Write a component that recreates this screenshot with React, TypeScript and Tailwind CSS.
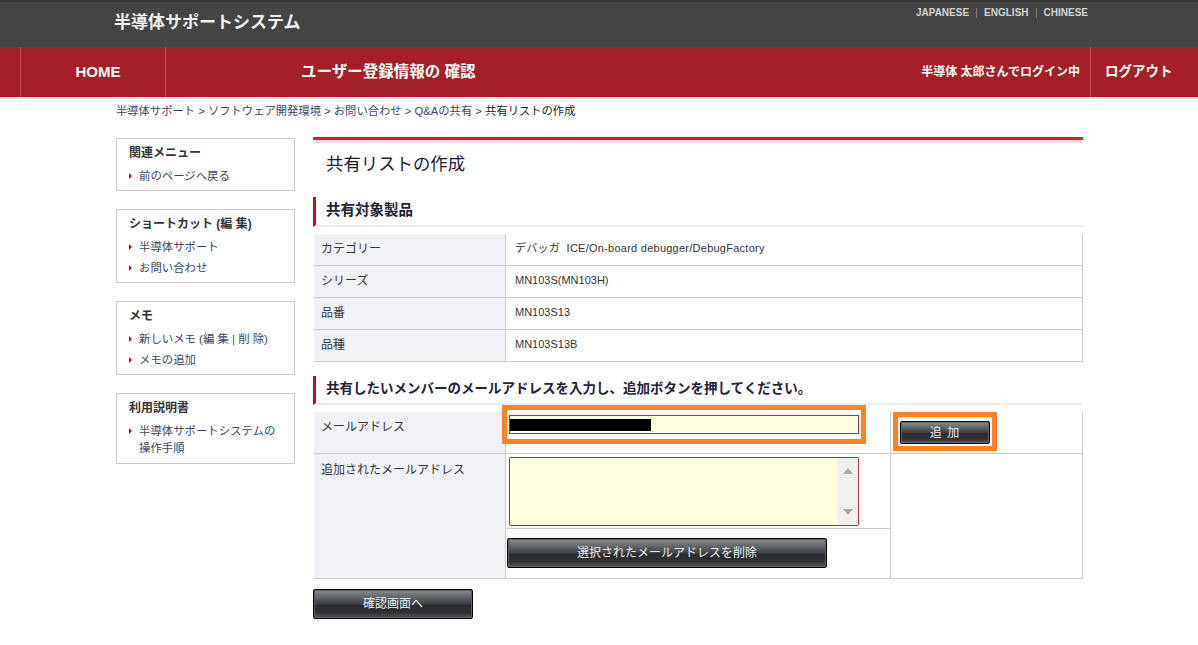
import React from "react";

const FONT = "font-['Liberation_Sans','Noto_Sans_CJK_JP',sans-serif]";

function Bullet() {
  return (
    <svg width="3" height="6" viewBox="0 0 3 6" className="mt-[5px] shrink-0">
      <polygon points="0,0 3,3 0,6" fill="#b5141c" />
    </svg>
  );
}

function SideLink({ children }: { children: React.ReactNode }) {
  return (
    <li className="flex gap-[7px] text-[11.4px] leading-[17px] text-[#3d4660]">
      <Bullet />
      <span>{children}</span>
    </li>
  );
}

function SideBox({ title, children, cls }: { title: string; children: React.ReactNode; cls: string }) {
  return (
    <div className={`border border-[#cccccc] pl-3 pr-2 pt-[5px] ${cls}`}>
      <div className="text-[12px] font-bold leading-[18px] text-[#333333]">{title}</div>
      <ul className="mt-[6px] flex flex-col gap-1">{children}</ul>
    </div>
  );
}

function Heading({ children, cls }: { children: React.ReactNode; cls: string }) {
  return (
    <div className={`flex items-center border-l-[3px] border-l-[#b5141c] border-b-2 border-b-[#eeeeee] pl-[10px] font-bold text-[#222233] ${cls}`}>
      {children}
    </div>
  );
}

function Btn({ children, cls }: { children: React.ReactNode; cls: string }) {
  return (
    <div className={`flex items-center justify-center rounded-[2px] border border-black bg-[linear-gradient(#8b8d8e_0%,#5c5f61_30%,#3d4043_50%,#292b2e_55%,#2e3033_80%,#55585a_100%)] text-[12px] text-[#eeeeee] shadow-[inset_0_0_0_1px_#5f6164] ${cls}`}>
      {children}
    </div>
  );
}

const rows = [
  { k: "カテゴリー", v: "デバッガ  ICE/On-board debugger/DebugFactory", t: "tracking-[0.25px]" },
  { k: "シリーズ", v: "MN103S(MN103H)", t: "" },
  { k: "品番", v: "MN103S13", t: "" },
  { k: "品種", v: "MN103S13B", t: "" },
];

export default function App() {
  return (
    <div className={`${FONT} h-[645px] w-[1198px] overflow-hidden bg-white`}>
      <header className="relative h-[47px] border-t-2 border-t-[#3a3838] bg-[#444444]">
        <div className="pl-[114px] pt-[11px] text-[17px] font-bold leading-[20px] text-[#f2f2f2]">半導体サポートシステム</div>
        <div className="absolute right-[110px] top-[5px] flex items-center text-[10px] font-bold leading-[12px] text-[#d4d4d4]">
          <span>JAPANESE</span>
          <span className="mx-[7px] h-[10px] w-px bg-[#777777]" />
          <span>ENGLISH</span>
          <span className="mx-[7px] h-[10px] w-px bg-[#777777]" />
          <span>CHINESE</span>
        </div>
      </header>

      <nav className="flex h-[50px] items-center bg-[#a51f27] text-white">
        <div className="ml-5 flex h-full w-[146px] items-center justify-center border-x border-x-[#bb4c52] pl-[10px] text-[15px] font-bold">HOME</div>
        <div className="ml-[135px] text-[15.5px] font-bold">ユーザー登録情報の 確認</div>
        <div className="ml-auto pr-[10px] text-[12px] font-bold">半導体 太郎さんでログイン中</div>
        <div className="flex h-full w-[108px] items-center border-l border-l-[#bb4c52] pl-[14px] text-[13.5px] font-bold">ログアウト</div>
      </nav>
      <div className="h-[2px] bg-[#f2eef0]" />

      <div className="pl-[116px] pt-[3px] text-[11.3px] leading-[18px] text-[#3d4660]">
        半導体サポート &gt; ソフトウェア開発環境 &gt; お問い合わせ &gt; Q&amp;Aの共有 &gt; <span className="text-[#222222]">共有リストの作成</span>
      </div>

      <main className="flex gap-[18px] pl-[116px] pt-[17px]">
        <aside className="flex w-[179px] flex-col gap-[18px] pt-px">
          <SideBox title="関連メニュー" cls="h-[53px]">
            <SideLink>前のページへ戻る</SideLink>
          </SideBox>
          <SideBox title="ショートカット (編 集)" cls="h-[74px]">
            <SideLink>半導体サポート</SideLink>
            <SideLink>お問い合わせ</SideLink>
          </SideBox>
          <SideBox title="メモ" cls="h-[74px]">
            <SideLink>新しいメモ (編 集 | 削 除)</SideLink>
            <SideLink>メモの追加</SideLink>
          </SideBox>
          <SideBox title="利用説明書" cls="h-[71px]">
            <SideLink>半導体サポートシステムの操作手順</SideLink>
          </SideBox>
        </aside>

        <section className="w-[770px]">
          <div className="h-[6px] border-t-[3px] border-t-[#c9252f] bg-[#f2e0e2]" />
          <h1 className="pl-[13px] pt-[7px] text-[17.4px] font-normal leading-[28px] text-[#1a1a33]">共有リストの作成</h1>
          <Heading cls="mt-[19px] h-[30px] text-[14.5px]">共有対象製品</Heading>

          <div className="ml-px mt-[7px] border-r border-r-[#cccccc]">
            {rows.map(({ k, v, t }) => (
              <div key={k} className="flex h-8 border-b border-b-[#cccccc] text-[12px] text-[#333333]">
                <div className="flex w-[192px] items-center border-r border-r-[#cccccc] bg-[#f1f2f6] pl-[7px] pb-[2px]">{k}</div>
                <div className={`flex items-center whitespace-pre pb-[2px] pl-[9px] text-[11px] ${t}`}>{v}</div>
              </div>
            ))}
          </div>

          <Heading cls="mt-[14px] h-[29px] text-[13.5px]">共有したいメンバーのメールアドレスを入力し、追加ボタンを押してください。</Heading>

          <div className="ml-px mt-[7px] border-r border-r-[#cccccc] text-[12px] text-[#333333]">
            <div className="flex h-[42px] border-b border-b-[#cccccc]">
              <div className="w-[192px] border-r border-r-[#cccccc] bg-[#f1f2f6] pl-[7px] pt-[6px]">メールアドレス</div>
              <div className="relative w-[385px] border-r border-r-[#cccccc] pl-[3px] pt-[3px]">
                <div className="h-[19px] w-[350px] border border-[#a83236] bg-[#ffffdf] pt-[3px]">
                  <div className="h-[12px] w-[141px] bg-black" />
                </div>
                <div className="absolute left-[-4px] top-[-7px] h-[39px] w-[364px] border-[5px] border-[#ff8124]" />
              </div>
              <div className="relative flex-1 pl-[9px] pt-[9px]">
                <Btn cls="h-[23px] w-[90px] tracking-[1px]">追 加</Btn>
                <div className="absolute left-[2px] top-0 h-[39px] w-[104px] border-[5px] border-[#ff8124]" />
              </div>
            </div>
            <div className="flex h-[125px] border-b border-b-[#cccccc]">
              <div className="w-[192px] border-r border-r-[#cccccc] bg-[#f1f2f6] pl-[7px] pt-[7px]">追加されたメールアドレス</div>
              <div className="w-[385px] border-r border-r-[#cccccc]">
                <div className="h-[75px] border-b border-b-[#cccccc] pl-[3px] pt-[3px]">
                  <div className="flex h-[69px] w-[350px] justify-end rounded-[2px] border border-[#a83236] bg-[#ffffdf]">
                    <div className="flex w-[21px] flex-col items-center justify-between bg-[#f0f0f0] py-[10px]">
                      <svg width="10" height="6" viewBox="0 0 10 6"><polygon points="5,0 10,6 0,6" fill="#a8a8a8" /></svg>
                      <svg width="10" height="6" viewBox="0 0 10 6"><polygon points="0,0 10,0 5,6" fill="#a8a8a8" /></svg>
                    </div>
                  </div>
                </div>
                <Btn cls="ml-px mt-[9px] h-[30px] w-[320px]">選択されたメールアドレスを削除</Btn>
              </div>
              <div className="flex-1" />
            </div>
          </div>

          <Btn cls="mt-[10px] h-[30px] w-[160px]">確認画面へ</Btn>
        </section>
      </main>
    </div>
  );
}
